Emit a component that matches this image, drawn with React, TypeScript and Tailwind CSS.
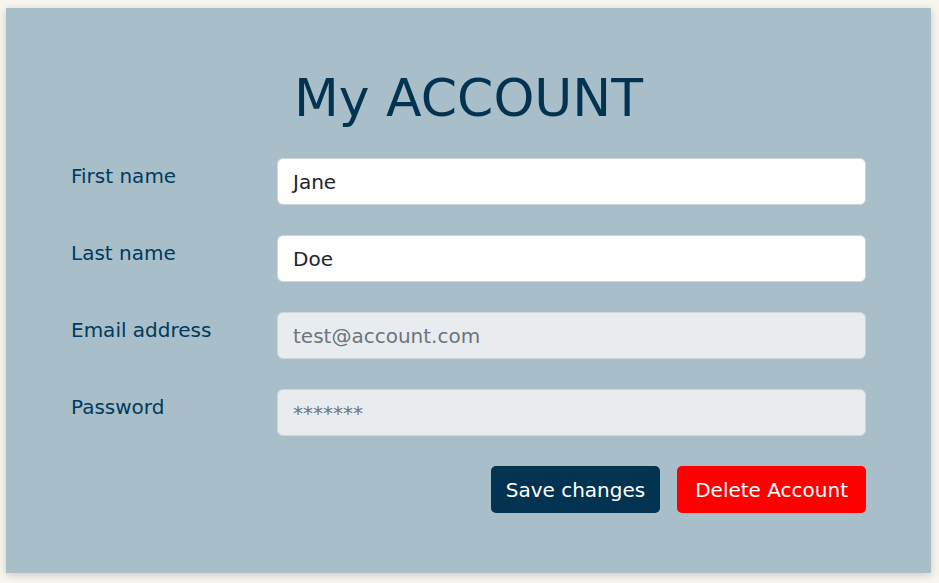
import React from "react";

const font = { fontFamily: '"DejaVu Sans", "Liberation Sans", sans-serif' };

function Row({ label, value, disabled }: { label: string; value: string; disabled?: boolean }) {
  return (
    <div className="flex items-start">
      <label className="w-[206px] shrink-0 pt-[3px] text-[20px] leading-[30px] text-[#013a5e]">{label}</label>
      <div
        className={`flex-1 h-[47px] rounded-[6px] border border-[#ced4da] px-[15px] flex items-center text-[20px] ${
          disabled ? "bg-[#e9ecef] text-[#6c757d]" : "bg-white text-[#212529]"
        }`}
      >
        {value}
      </div>
    </div>
  );
}

export default function App() {
  return (
    <div className="min-h-[583px] w-[939px] bg-[#f8f5ef] pt-[8px] pl-[6px]" style={font}>
      <div className="w-[925px] h-[565px] bg-[#a8bec9] shadow-[0_2px_8px_rgba(0,0,0,0.18)] px-[65px] pt-[60px]">
        <h1 className="text-center text-[52px] leading-[60px] text-[#023350] font-normal">My ACCOUNT</h1>
        <div className="mt-[30px] flex flex-col gap-[30px]">
          <Row label="First name" value="Jane" />
          <Row label="Last name" value="Doe" />
          <Row label="Email address" value="test@account.com" disabled />
          <Row label="Password" value="*******" disabled />
        </div>
        <div className="mt-[30px] flex justify-end gap-[17px]">
          <button className="h-[47px] px-[15px] rounded-[5px] bg-[#023350] text-white text-[20px]">Save changes</button>
          <button className="h-[47px] px-[18px] rounded-[5px] bg-[#ff0000] text-white text-[20px]">Delete Account</button>
        </div>
      </div>
    </div>
  );
}
